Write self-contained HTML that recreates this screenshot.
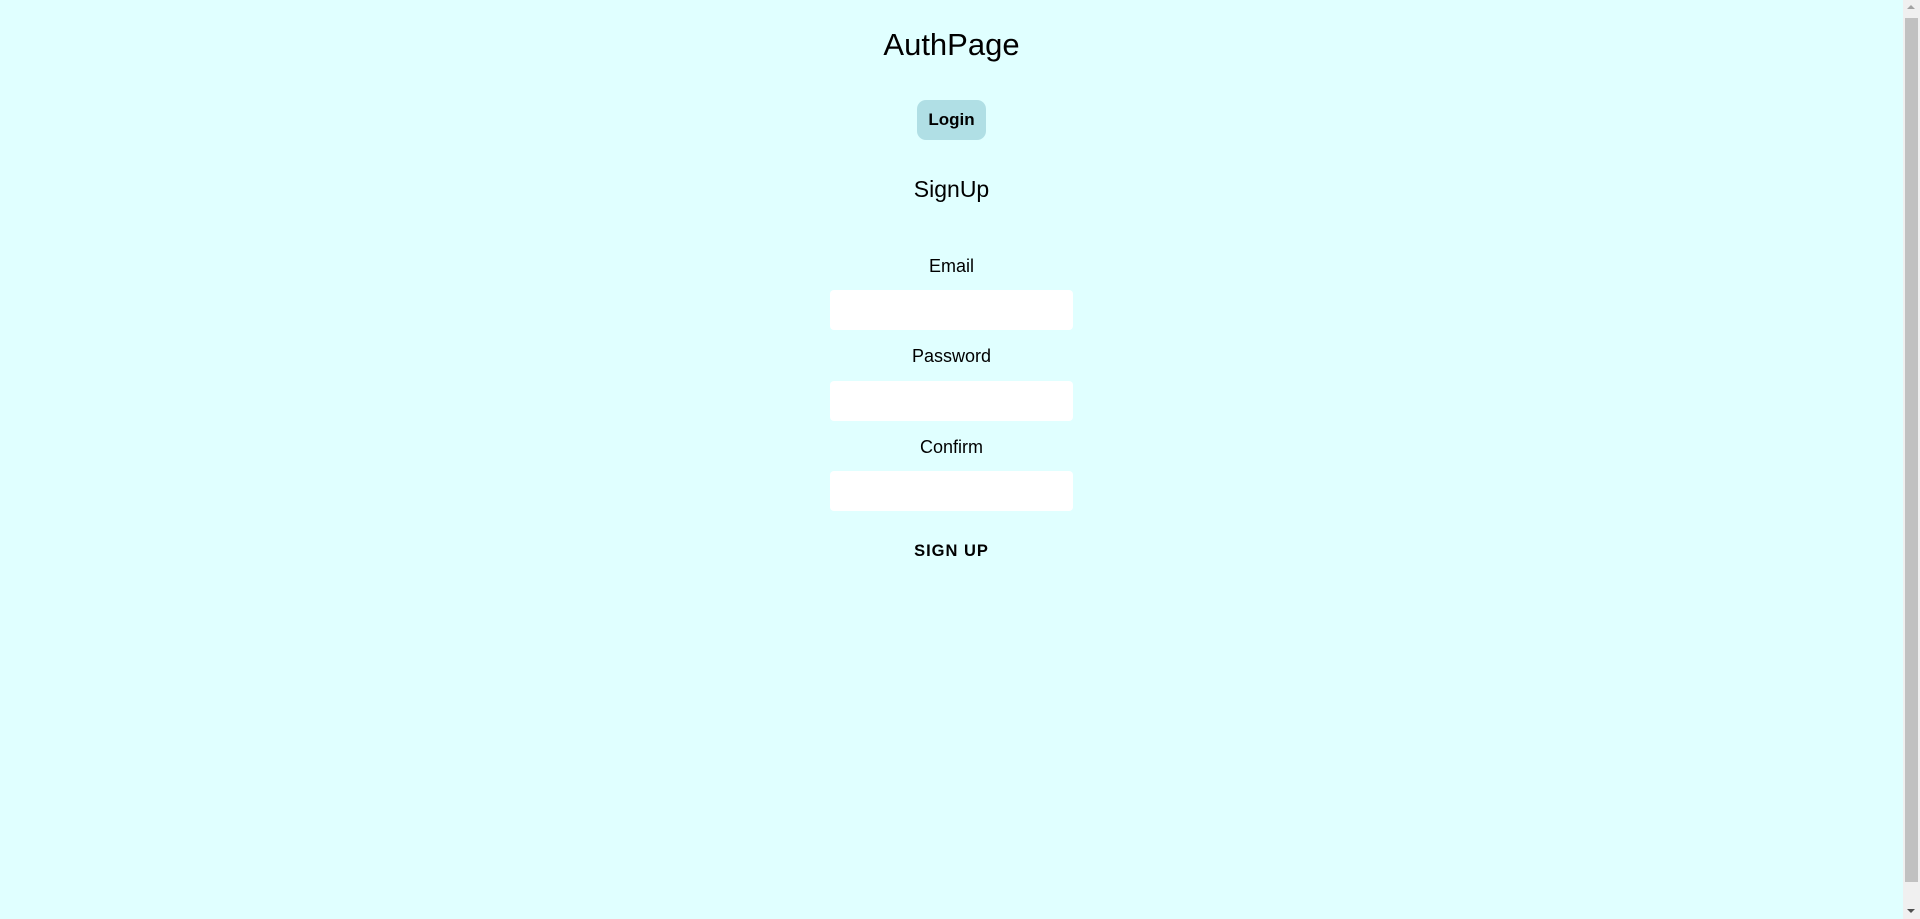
<!DOCTYPE html>
<html><head><style>
html,body{margin:0;padding:0}
body{width:1920px;height:919px;background:#e0ffff;position:relative;overflow:hidden;font-family:"Liberation Sans",sans-serif;color:#000}
.c{position:absolute;left:0;width:1903px;text-align:center;white-space:nowrap}
.l{font-size:18px;line-height:20px}
.inp{position:absolute;left:830px;width:243px;height:40px;background:#fff;border-radius:4px}
</style></head><body>
<div class="c" style="top:27px;font-size:31px;line-height:36px">AuthPage</div>
<div style="position:absolute;left:917px;top:100px;width:69px;height:40px;background:#b0dfe5;border-radius:9px;font-weight:bold;font-size:17px;line-height:40px;text-align:center">Login</div>
<div class="c" style="top:175px;font-size:23px;line-height:28px">SignUp</div>
<div class="c l" style="top:256px">Email</div>
<div class="inp" style="top:290px"></div>
<div class="c l" style="top:346px">Password</div>
<div class="inp" style="top:381px"></div>
<div class="c l" style="top:437px">Confirm</div>
<div class="inp" style="top:471px"></div>
<div class="c" style="top:542px;font-size:16.5px;line-height:18px;font-weight:bold;letter-spacing:1px">SIGN UP</div>
<div style="position:absolute;left:1903px;top:0;width:17px;height:919px;background:#f0f0f0"></div>
<div style="position:absolute;left:1905px;top:18px;width:13px;height:864px;background:#c1c1c1"></div>
<div style="position:absolute;left:1907px;top:5px;width:0;height:0;border-left:4px solid transparent;border-right:4px solid transparent;border-bottom:4px solid #a3a3a3"></div>
<div style="position:absolute;left:1907px;top:909px;width:0;height:0;border-left:4px solid transparent;border-right:4px solid transparent;border-top:4px solid #505050"></div>
</body></html>
